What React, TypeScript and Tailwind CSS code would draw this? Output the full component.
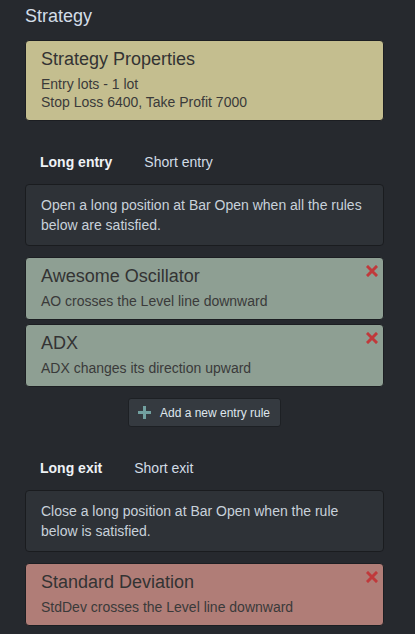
import React from "react";

const font = { fontFamily: '"Liberation Sans", Arial, Helvetica, sans-serif' };

function XIcon() {
  return (
    <svg width="12" height="12" viewBox="0 0 12 12" className="absolute top-[7px] right-[5px]">
      <path d="M2 2 L10 10 M10 2 L2 10" stroke="#c0393b" strokeWidth="3" strokeLinecap="square" />
    </svg>
  );
}

function PlusIcon() {
  return (
    <svg width="13" height="13" viewBox="0 0 13 13">
      <rect x="5" y="0" width="3" height="13" fill="#72a0a0" />
      <rect x="0" y="5" width="13" height="3" fill="#72a0a0" />
    </svg>
  );
}

function RuleCard({ title, text, bg, remove = true }: { title: string; text: string[]; bg: string; remove?: boolean }) {
  return (
    <div className={`relative border border-[#1c1e22] rounded-[4px] px-[15px] pt-[7px] pb-[9px] ${bg}`}>
      <div className="text-[18px] leading-[22px] text-[#333333]">{title}</div>
      <div className="mt-[5px] text-[14px] leading-[18px] text-[#3a3a3a]">
        {text.map((t) => (
          <div key={t}>{t}</div>
        ))}
      </div>
      {remove && <XIcon />}
    </div>
  );
}

function Tabs({ a, b }: { a: string; b: string }) {
  return (
    <div className="flex gap-[2px] text-[14px] leading-[20px]">
      <div className="px-[15px] py-[10px] font-bold text-[#eef2f6]">{a}</div>
      <div className="px-[15px] py-[10px] text-[#d2dce6]">{b}</div>
    </div>
  );
}

function Desc({ children }: { children: React.ReactNode }) {
  return (
    <div className="mt-[2px] border border-[#1a1c1f] rounded-[4px] bg-[#2e3237] px-[15px] py-[10px] text-[14px] leading-[20px] text-[#c8d1da]">
      {children}
    </div>
  );
}

export default function App() {
  return (
    <div className="min-h-screen w-full bg-[#26292e]" style={font}>
      <div className="ml-[25px] w-[359px] pt-[5px]">
        <div className="text-[18px] leading-[22px] text-[#d3dde8]">Strategy</div>
        <div className="mt-[13px]">
          <RuleCard
            title="Strategy Properties"
            text={["Entry lots - 1 lot", "Stop Loss 6400, Take Profit 7000"]}
            bg="bg-[#c4be8f]"
            remove={false}
          />
        </div>

        <div className="mt-[21px]">
          <Tabs a="Long entry" b="Short entry" />
        </div>
        <Desc>Open a long position at Bar Open when all the rules below are satisfied.</Desc>

        <div className="mt-[11px] flex flex-col gap-[4px]">
          <RuleCard title="Awesome Oscillator" text={["AO crosses the Level line downward"]} bg="bg-[#8e9f93]" />
          <RuleCard title="ADX" text={["ADX changes its direction upward"]} bg="bg-[#8e9f93]" />
        </div>

        <div className="mt-[11px] flex justify-center">
          <button className="h-[29px] inline-flex items-center gap-[9px] pl-[9px] pr-[10px] border border-[#1d2024] rounded-[3px] bg-[#353a40] text-[12px] text-[#dfe6ed]">
            <PlusIcon />
            <span>Add a new entry rule</span>
          </button>
        </div>

        <div className="mt-[21px]">
          <Tabs a="Long exit" b="Short exit" />
        </div>
        <Desc>Close a long position at Bar Open when the rule below is satisfied.</Desc>

        <div className="mt-[11px]">
          <RuleCard title="Standard Deviation" text={["StdDev crosses the Level line downward"]} bg="bg-[#b07d77]" />
        </div>
      </div>
    </div>
  );
}
